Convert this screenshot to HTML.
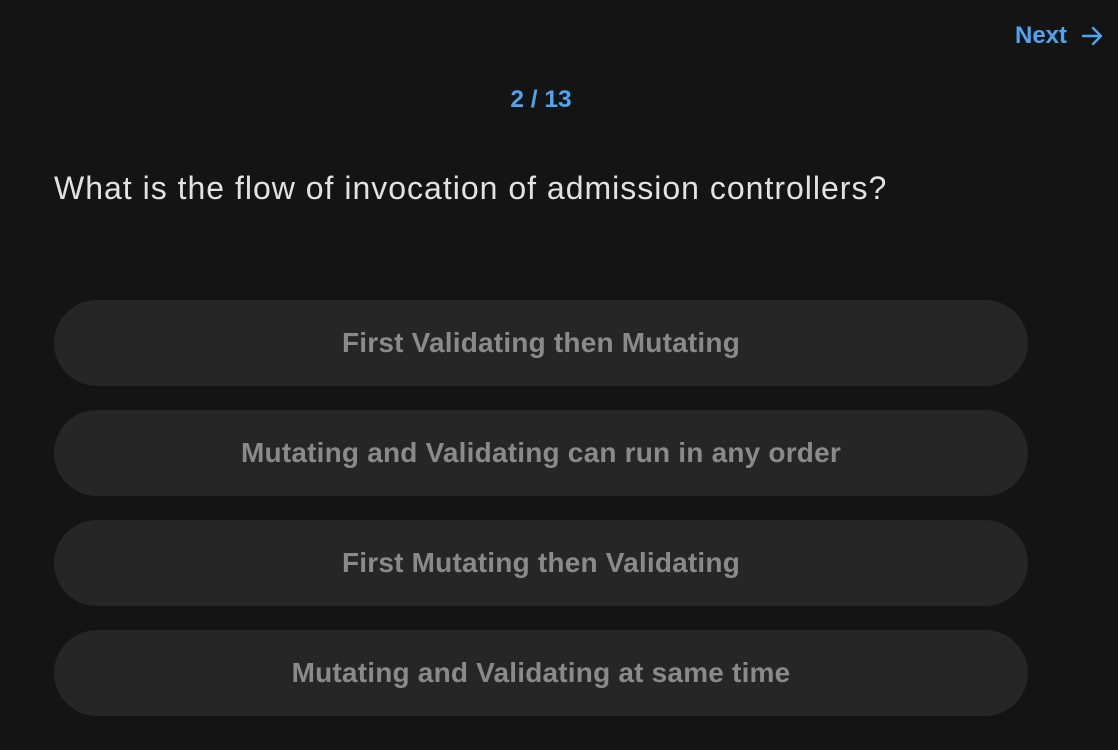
<!DOCTYPE html>
<html><head><style>
body{margin:0;width:1118px;height:750px;background:#141414;font-family:"Liberation Sans",sans-serif;position:relative;overflow:hidden}
.next{position:absolute;left:1015px;top:22px;color:#4ea6f2;font-weight:bold;font-size:24px;line-height:28px;display:flex;align-items:center}
.next svg{margin-left:14px}
.cnt{position:absolute;left:0;width:1082px;top:86px;text-align:center;color:#4ea6f2;font-weight:bold;font-size:24.5px;line-height:28px}
.q{position:absolute;left:54px;top:170px;color:#e2e2e2;font-size:32px;letter-spacing:1px;line-height:36px}
.opt{position:absolute;left:54px;width:974px;height:86px;border-radius:43px;background:#262626;color:#8a8a8a;font-weight:bold;font-size:28px;letter-spacing:0.2px;display:flex;align-items:center;justify-content:center}
</style></head><body>
<div class="next">Next<svg width="22" height="22" viewBox="0 0 22 22" fill="none" stroke="#4ea6f2" stroke-width="2.4" stroke-linecap="round" stroke-linejoin="round"><path d="M2 11H20M12 3L20 11L12 19"/></svg></div>
<div class="cnt">2 / 13</div>
<div class="q">What is the flow of invocation of admission controllers?</div>
<div class="opt" style="top:300px">First Validating then Mutating</div>
<div class="opt" style="top:410px">Mutating and Validating can run in any order</div>
<div class="opt" style="top:520px">First Mutating then Validating</div>
<div class="opt" style="top:630px">Mutating and Validating at same time</div>
</body></html>
